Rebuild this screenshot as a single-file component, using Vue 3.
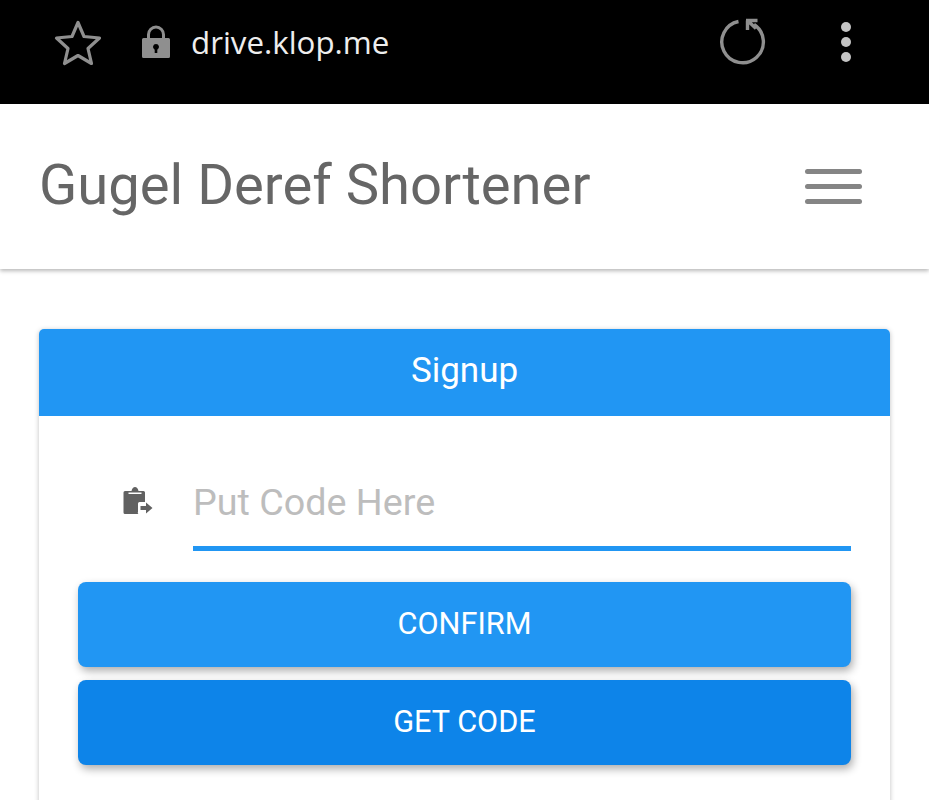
<template>
  <div class="page">
    <div class="browser-bar">
      <svg class="star" width="48" height="48" viewBox="0 0 48 48">
        <path d="M24 3.5 L30 17.5 L45.5 19 L34 29.5 L37.5 44.5 L24 36.5 L10.5 44.5 L14 29.5 L2.5 19 L18 17.5 Z" fill="none" stroke="#8f8f8f" stroke-width="3.2" stroke-linejoin="round" />
      </svg>
      <svg class="lock" width="30" height="34" viewBox="0 0 30 34">
        <path d="M7.5 15 V9.5 A7.5 7.5 0 0 1 22.5 9.5 V15" fill="none" stroke="#8f8f8f" stroke-width="3" />
        <path fill-rule="evenodd" fill="#8f8f8f" d="M2.5 13 H27.5 A1.5 1.5 0 0 1 29 14.5 V31.5 A1.5 1.5 0 0 1 27.5 33 H2.5 A1.5 1.5 0 0 1 1 31.5 V14.5 A1.5 1.5 0 0 1 2.5 13 Z M15 19 A3 3 0 0 0 13.7 24.7 V28 H16.3 V24.7 A3 3 0 0 0 15 19 Z" />
      </svg>
      <span class="url">drive.klop.me</span>
      <svg class="reload" width="48" height="48" viewBox="0 0 48 48">
        <path d="M19.5 3.5 A20.8 20.8 0 1 0 35 6.5" fill="none" stroke="#8f8f8f" stroke-width="3.4" />
        <path d="M27 2.5 H38.5 M28.5 2.5 V12 M28.5 2.5 L37 10.5" fill="none" stroke="#8f8f8f" stroke-width="3.4" />
      </svg>
      <div class="dots"><i></i><i></i><i></i></div>
    </div>

    <header class="navbar">
      <span class="brand">Gugel Deref Shortener</span>
      <button class="burger" aria-label="Menu"><i></i><i></i><i></i></button>
    </header>

    <main class="content">
      <section class="card">
        <div class="card-head">Signup</div>
        <div class="card-body">
          <div class="field">
            <svg class="field-icon" width="30" height="30" viewBox="0 0 30 30">
              <path fill-rule="evenodd" fill="#616161" d="M2 5 H8.5 C9 2.2 10.5 1 12 1 C13.5 1 15 2.2 15.5 5 H20.5 A1.5 1.5 0 0 1 22 6.5 V16 H16.5 A1.5 1.5 0 0 0 15 17.5 V26 A1.5 1.5 0 0 0 15.5 28 H2 A1.5 1.5 0 0 1 .5 26.5 V6.5 A1.5 1.5 0 0 1 2 5 Z M5.5 8 H18.5 V6.5 H5.5 Z" />
              <path fill="#616161" d="M17.5 20 H23 V16.5 L29.5 22 L23 27.5 V24 H17.5 Z" />
            </svg>
            <input class="code-input" type="text" placeholder="Put Code Here" />
          </div>
          <button class="btn confirm">CONFIRM</button>
          <button class="btn get-code">GET CODE</button>
        </div>
      </section>
    </main>
  </div>
</template>

<script setup>
</script>

<style>
html, body {
  margin: 0;
  background: #fff;
  overflow: hidden;
}
</style>

<style scoped>
.page {
  height: 800px;
  overflow: hidden;
  font-family: Roboto, "Liberation Sans", sans-serif;
}

.browser-bar {
  height: 104px;
  background: #000;
  display: flex;
  align-items: center;
  box-sizing: border-box;
  padding: 0 78px 20px 54px;
}

.star {
  margin-top: 2px;
}

.lock {
  margin-left: 39px;
}

.url {
  margin-left: 20px;
  color: #eee;
  font-family: "Open Sans", sans-serif;
  font-size: 31.3px;
}

.reload {
  margin-left: auto;
}

.dots {
  margin-left: 74px;
  display: flex;
  flex-direction: column;
  gap: 5px;
}

.dots i {
  width: 10px;
  height: 10px;
  border-radius: 50%;
  background: #c4c4c4;
}

.navbar {
  height: 165px;
  background: #fff;
  display: flex;
  align-items: center;
  justify-content: space-between;
  padding: 0 67px 0 39px;
  box-shadow: 0 2px 4px rgba(0, 0, 0, 0.28);
  position: relative;
}

.brand {
  font-size: 56.2px;
  color: #666;
  margin-top: -4px;
}

.burger {
  width: 57px;
  padding: 0;
  border: none;
  background: none;
  display: flex;
  flex-direction: column;
  gap: 10px;
}

.burger i {
  height: 5px;
  border-radius: 3px;
  background: #858585;
}

.content {
  padding: 60px 39px 0;
}

.card {
  border-radius: 5px;
  background: #fff;
  box-shadow: 0 1px 5px rgba(0, 0, 0, 0.25);
  overflow: hidden;
  height: 600px;
}

.card-head {
  height: 87px;
  background: #2196f3;
  color: #fff;
  font-size: 35px;
  line-height: 84px;
  text-align: center;
}

.card-body {
  padding: 48px 39px 0;
}

.field {
  display: flex;
  align-items: flex-start;
  margin-bottom: 38px;
}

.field-icon {
  margin: 22px 0 0 45px;
}

.code-input {
  margin-left: 40px;
  flex: 1;
  min-width: 0;
  height: 82px;
  box-sizing: content-box;
  padding: 0 0 7px;
  margin-bottom: -7px;
  border: none;
  border-bottom: 5px solid #2196f3;
  outline: none;
  background: none;
  font-family: inherit;
  font-size: 37.7px;
  color: #333;
}

.code-input {
  height: 75px;
}

.code-input::placeholder {
  color: #bdbdbd;
  opacity: 1;
}

.btn {
  display: block;
  width: 100%;
  height: 85px;
  padding: 0 0 3px;
  border: none;
  border-radius: 8px;
  color: #fff;
  font-family: inherit;
  font-size: 30.7px;
  box-shadow: 2px 4px 8px rgba(0, 0, 0, 0.32);
}

.confirm {
  background: #2196f3;
  margin-bottom: 13px;
}

.get-code {
  background: #0d84e9;
}
</style>
